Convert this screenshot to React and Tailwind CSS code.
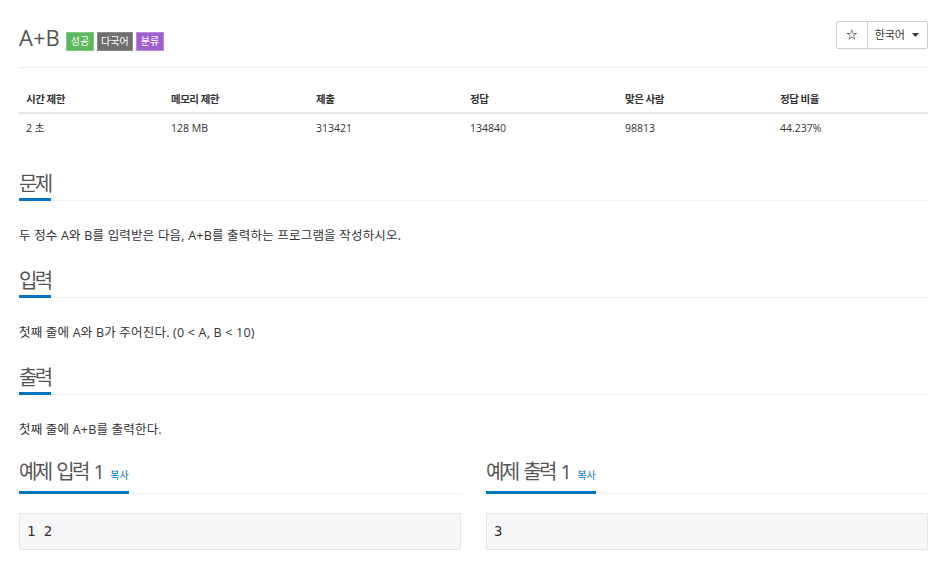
import React from "react";

const font = { fontFamily: '"Open Sans", "Noto Sans CJK KR", sans-serif' };

const stats = [
  { label: "시간 제한", value: "2 초" },
  { label: "메모리 제한", value: "128 MB" },
  { label: "제출", value: "313421" },
  { label: "정답", value: "134840" },
  { label: "맞은 사람", value: "98813" },
  { label: "정답 비율", value: "44.237%" },
];

const sections = [
  { title: "문제", body: "두 정수 A와 B를 입력받은 다음, A+B를 출력하는 프로그램을 작성하시오." },
  { title: "입력", body: "첫째 줄에 A와 B가 주어진다. (0 < A, B < 10)" },
  { title: "출력", body: "첫째 줄에 A+B를 출력한다." },
];

const Heading = ({ children, tall }) => (
  <div className="flex items-end">
    <span
      className={
        "border-b-[3px] border-[#0076c0] text-[20px] tracking-[-2.6px] [word-spacing:3px] text-[#555] " +
        (tall ? "leading-[32px]" : "leading-[28px]")
      }
    >
      {children}
    </span>
    <div className="flex-1 border-b border-[#f0f0f0]" />
  </div>
);

const Sample = ({ title, data }) => (
  <div>
    <Heading tall>
      {title}
      <span className="ml-[8px] text-[10px] tracking-normal text-[#0076c0]">복사</span>
    </Heading>
    <pre
      className="mt-[19px] h-[37px] border border-[#e4e4ea] bg-[#f7f7f9] px-[7px] text-[14px] leading-[35px] text-[#333]"
      style={{ fontFamily: '"DejaVu Sans Mono", monospace' }}
    >
      {data}
    </pre>
  </div>
);

export default function App() {
  return (
    <div className="min-h-screen bg-white pl-[19px] pr-[17px] text-[#333]" style={font}>
      <div className="flex items-start justify-between border-b border-[#eee] pt-[21px] pb-[16px]">
        <div className="flex items-start">
          <h1 className="mt-[2px] text-[22px] leading-[28px] text-[#555]">A+B</h1>
          <div className="ml-[6px] mt-[11px] flex gap-[3px] text-[10px] leading-[17px] text-white">
            <span className="border border-[#7fcc7f] bg-[#5cb85c] px-[4px]">성공</span>
            <span className="border border-[#8a8a8a] bg-[#6f6f6f] px-[3px]">다국어</span>
            <span className="border border-[#b98ae0] bg-[#9d5fd0] px-[4px]">분류</span>
          </div>
        </div>
        <div className="flex h-[28px] rounded-[2px] border border-[#ccc] text-[11px] text-[#333]">
          <div className="flex w-[31px] items-center justify-center border-r border-[#ccc] text-[11px] font-bold">☆</div>
          <div className="flex items-center gap-[7px] pl-[7px] pr-[8px]">
            <span>한국어</span>
            <svg width="7" height="4" viewBox="0 0 7 4">
              <path d="M0 0 L7 0 L3.5 4 Z" fill="#333" />
            </svg>
          </div>
        </div>
      </div>

      <div className="mt-[16px] text-[10.5px]">
        <div className="grid h-[30px] grid-cols-[145px_145px_154px_155px_155px_1fr] items-center border-b-2 border-[#e6e6e6] pt-[3px] font-bold tracking-[-0.5px]">
          {stats.map((s) => (
            <div key={s.label} className="pl-[7px]">{s.label}</div>
          ))}
        </div>
        <div className="grid h-[28px] grid-cols-[145px_145px_154px_155px_155px_1fr] items-center pt-[2px]">
          {stats.map((s) => (
            <div key={s.label} className="pl-[7px]">{s.value}</div>
          ))}
        </div>
      </div>

      <div className="mt-[28px]">
        {sections.map((sec, i) => (
          <div key={sec.title} className={i > 0 ? "mt-[22px]" : ""}>
            <Heading>{sec.title}</Heading>
            <p className="mt-[26px] text-[12.5px] leading-[18px] tracking-[0.2px]">{sec.body}</p>
          </div>
        ))}
      </div>

      <div className="mt-[17px] grid grid-cols-2 gap-[25px]">
        <Sample title="예제 입력 1" data="1 2" />
        <Sample title="예제 출력 1" data="3" />
      </div>
    </div>
  );
}
